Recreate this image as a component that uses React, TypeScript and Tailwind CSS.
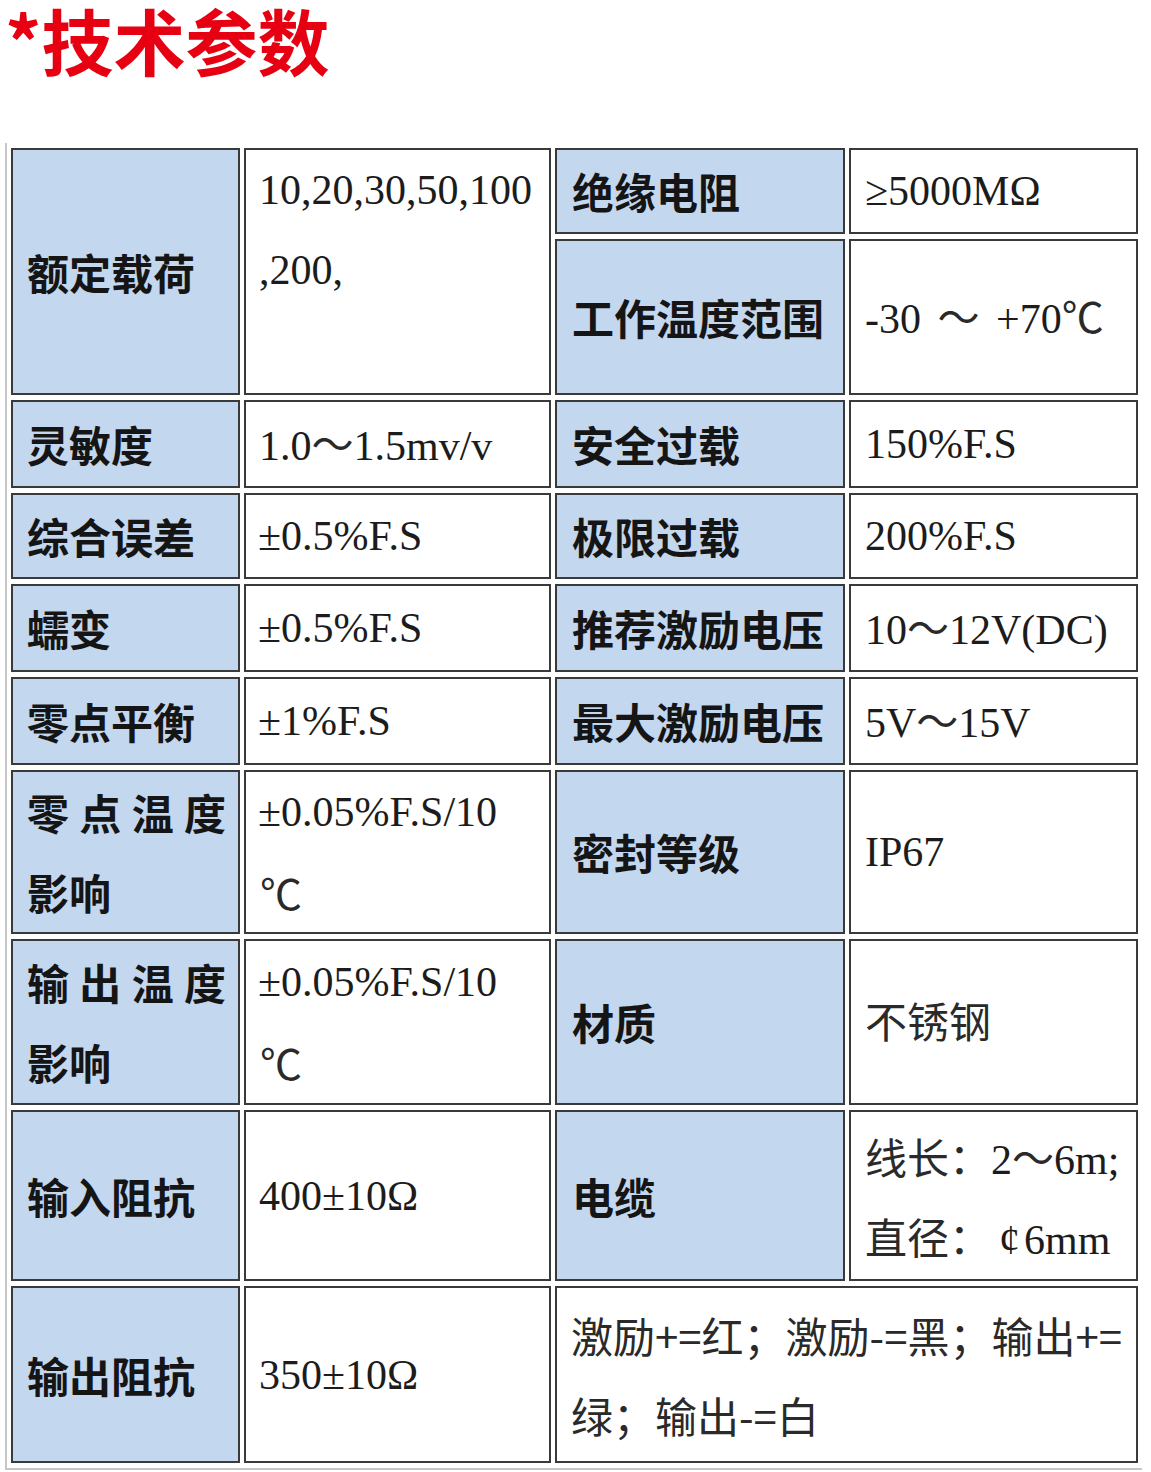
import React from "react";

const LBL =
  "bg-[#c3d7ef] border-2 border-[#3a3a3a] font-['Noto_Sans_CJK_SC',sans-serif] font-bold text-[42px] leading-[80px] text-[#151515] whitespace-nowrap";
const VAL =
  "bg-white border-2 border-[#3a3a3a] font-['Liberation_Serif','Noto_Sans_CJK_SC',serif] text-[42px] leading-[80px] text-[#1c1c1c] whitespace-nowrap";
const CJKV = "font-['Noto_Sans_CJK_SC',sans-serif] text-[#2a2a2a]";
const LINE = "h-[80px] overflow-visible";

function Spread({ text }: { text: string }) {
  return (
    <div className={`flex justify-between ${LINE}`}>
      {text.split("").map((c, i) => (
        <span key={i}>{c}</span>
      ))}
    </div>
  );
}

export default function App() {
  return (
    <div className="w-[1151px] h-[1472px] bg-white overflow-hidden">
      <div className="h-[143px] pl-[5px]">
        <div className="font-['Noto_Sans_CJK_SC',sans-serif] font-bold text-[72px] leading-[78px] text-[#e60012] whitespace-nowrap">
          *技术参数
        </div>
      </div>
      <table className="ml-[5px] w-[1137px] table-fixed border-separate border-spacing-x-[4px] border-spacing-y-[5px] border-l-2 border-b-2 border-[#c6c6c6]">
        <colgroup>
          <col className="w-[229px]" />
          <col className="w-[307px]" />
          <col className="w-[290px]" />
          <col className="w-[289px]" />
        </colgroup>
        <tbody>
          <tr className="h-[86px]">
            <td rowSpan={2} className={`${LBL} pl-[14px] pr-[12px]`}>
              额定载荷
            </td>
            <td rowSpan={2} className={`${VAL} pl-[13px] align-top`}>
              <div className={LINE}>10,20,30,50,100</div>
              <div className={LINE}>,200,</div>
            </td>
            <td className={`${LBL} pl-[15px]`}>绝缘电阻</td>
            <td className={`${VAL} pl-[14px]`}>≥5000MΩ</td>
          </tr>
          <tr className="h-[156px]">
            <td className={`${LBL} pl-[15px]`}>工作温度范围</td>
            <td className={`${VAL} pl-[14px]`}>
              -30 <span className={`${CJKV} mx-[6px]`}>～</span> +70<span className={CJKV}>℃</span>
            </td>
          </tr>
          <tr className="h-[88px]">
            <td className={`${LBL} pl-[14px]`}>灵敏度</td>
            <td className={`${VAL} pl-[13px]`}>
              1.0<span className={CJKV}>～</span>1.5mv/v
            </td>
            <td className={`${LBL} pl-[15px]`}>安全过载</td>
            <td className={`${VAL} pl-[14px]`}>150%F.S</td>
          </tr>
          <tr className="h-[86px]">
            <td className={`${LBL} pl-[14px]`}>综合误差</td>
            <td className={`${VAL} pl-[12px]`}>±0.5%F.S</td>
            <td className={`${LBL} pl-[15px]`}>极限过载</td>
            <td className={`${VAL} pl-[14px]`}>200%F.S</td>
          </tr>
          <tr className="h-[87px]">
            <td className={`${LBL} pl-[14px]`}>蠕变</td>
            <td className={`${VAL} pl-[12px]`}>±0.5%F.S</td>
            <td className={`${LBL} pl-[15px]`}>推荐激励电压</td>
            <td className={`${VAL} pl-[14px]`}>
              10<span className={CJKV}>～</span>12V(DC)
            </td>
          </tr>
          <tr className="h-[87px]">
            <td className={`${LBL} pl-[14px]`}>零点平衡</td>
            <td className={`${VAL} pl-[12px]`}>±1%F.S</td>
            <td className={`${LBL} pl-[15px]`}>最大激励电压</td>
            <td className={`${VAL} pl-[14px]`}>
              5V<span className={CJKV}>～</span>15V
            </td>
          </tr>
          <tr className="h-[163px]">
            <td className={`${LBL} pl-[14px] pr-[12px]`}>
              <Spread text="零点温度" />
              <div className={LINE}>影响</div>
            </td>
            <td className={`${VAL} pl-[12px]`}>
              <div className={LINE}>±0.05%F.S/10</div>
              <div className={LINE}>
                <span className={`${CJKV} pl-[2px]`}>℃</span>
              </div>
            </td>
            <td className={`${LBL} pl-[15px]`}>密封等级</td>
            <td className={`${VAL} pl-[14px]`}>IP67</td>
          </tr>
          <tr className="h-[166px]">
            <td className={`${LBL} pl-[14px] pr-[12px]`}>
              <Spread text="输出温度" />
              <div className={LINE}>影响</div>
            </td>
            <td className={`${VAL} pl-[12px]`}>
              <div className={LINE}>±0.05%F.S/10</div>
              <div className={LINE}>
                <span className={`${CJKV} pl-[2px]`}>℃</span>
              </div>
            </td>
            <td className={`${LBL} pl-[15px]`}>材质</td>
            <td className={`${VAL} pl-[14px]`}>
              <span className={CJKV}>不锈钢</span>
            </td>
          </tr>
          <tr className="h-[171px]">
            <td className={`${LBL} pl-[14px]`}>输入阻抗</td>
            <td className={`${VAL} pl-[13px]`}>400±10Ω</td>
            <td className={`${LBL} pl-[15px]`}>电缆</td>
            <td className={`${VAL} pl-[14px]`}>
              <div className={LINE}>
                <span className={CJKV}>线长：</span>2<span className={CJKV}>～</span>6m;
              </div>
              <div className={LINE}>
                <span className={CJKV}>直径：</span>
                <span className="ml-[8px] mr-[4px]">¢</span>6mm
              </div>
            </td>
          </tr>
          <tr className="h-[177px]">
            <td className={`${LBL} pl-[14px]`}>输出阻抗</td>
            <td className={`${VAL} pl-[13px]`}>350±10Ω</td>
            <td colSpan={2} className={`${VAL} pl-[14px]`}>
              <div className={`${LINE} ${CJKV}`}>激励+=红；激励-=黑；输出+=</div>
              <div className={`${LINE} ${CJKV}`}>绿；输出-=白</div>
            </td>
          </tr>
        </tbody>
      </table>
    </div>
  );
}
